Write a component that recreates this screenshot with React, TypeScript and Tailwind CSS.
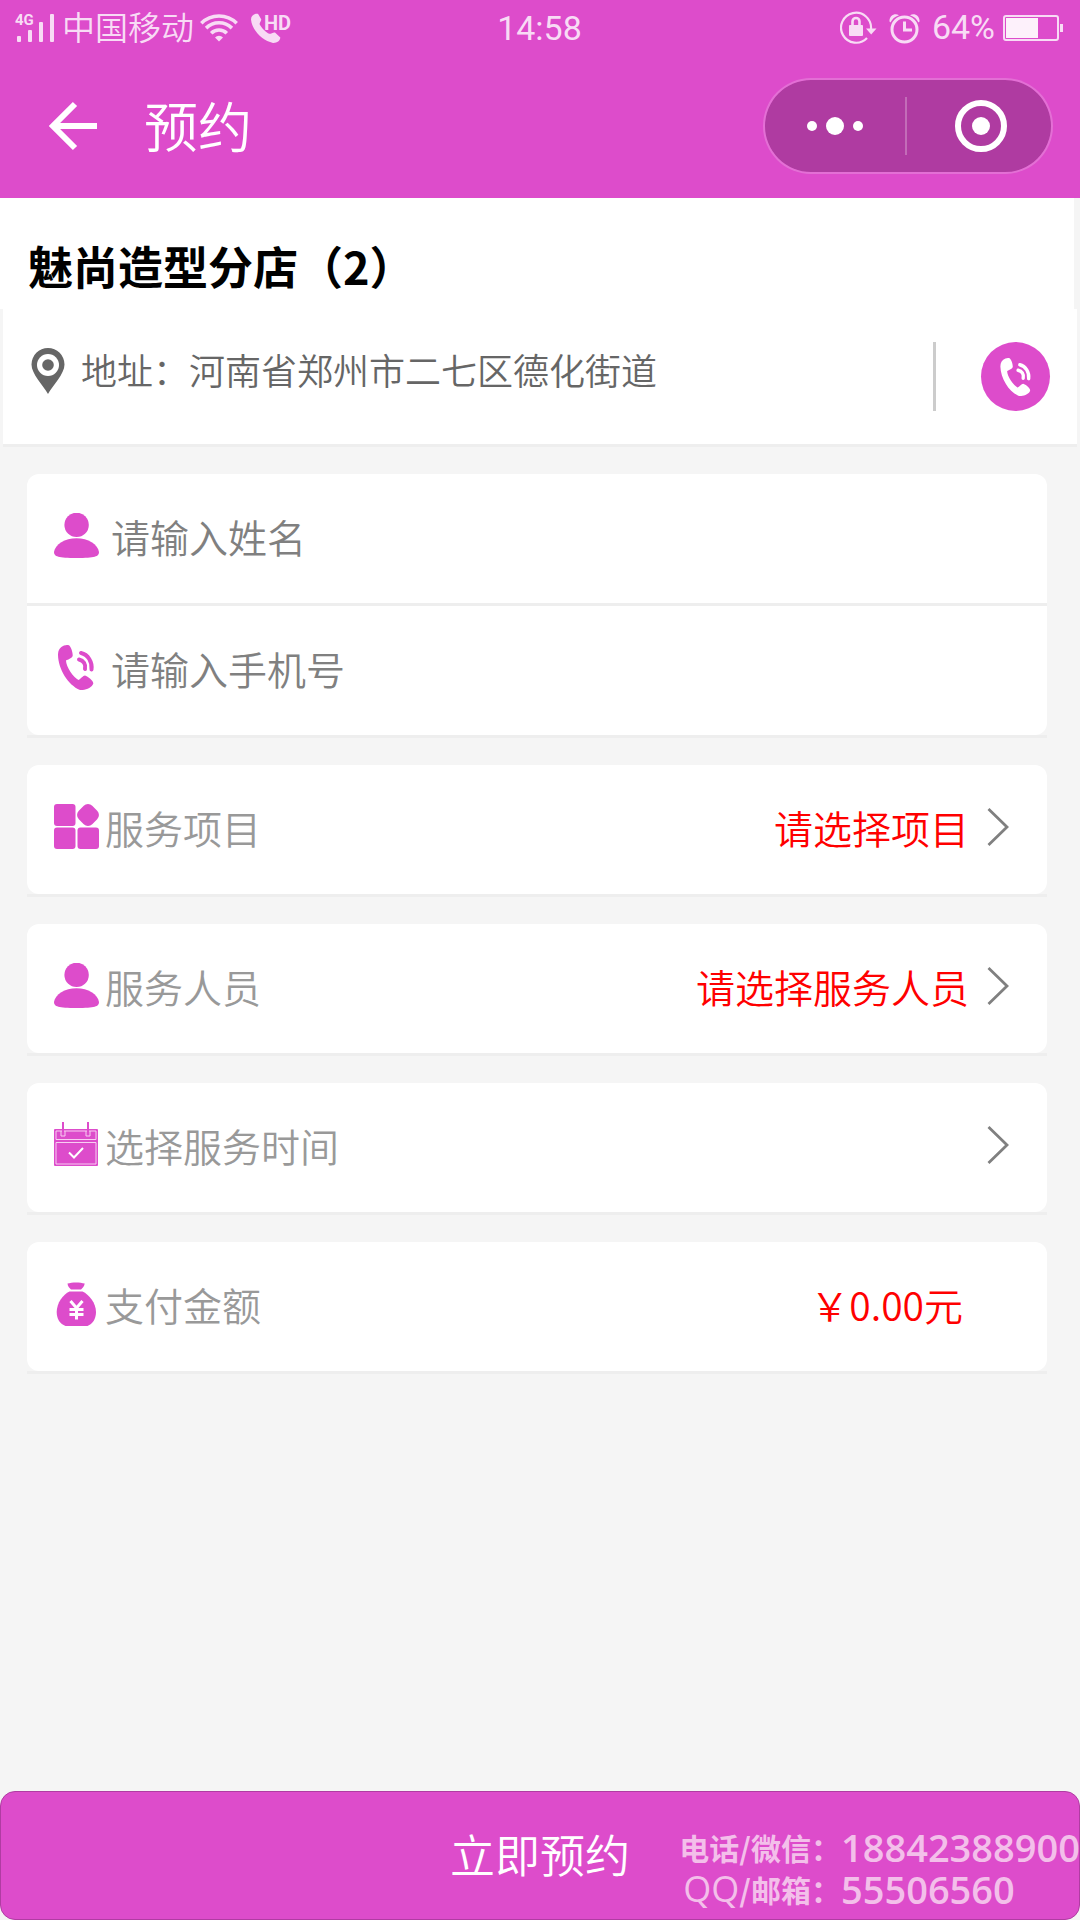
import { useState, type ReactNode } from "react";

function SignalIcon() {
  return (
    <svg width="40" height="38" viewBox="0 -4 40 38" fill="currentColor">
      <text x="0" y="12" className="font-['Roboto',sans-serif] text-[15px] font-bold">4G</text>
      <rect x="2" y="23" width="4" height="6" rx="1" />
      <rect x="13" y="17" width="4" height="12" rx="1" />
      <rect x="24" y="9" width="4" height="20" rx="1" />
      <rect x="35" y="1" width="4" height="28" rx="1" />
    </svg>
  );
}

function WifiIcon() {
  return (
    <svg width="40" height="30" viewBox="0 0 40 30" fill="none" stroke="currentColor" strokeWidth="3.6">
      <path d="M2.3 10.3A25.2 25.2 0 0 1 37.7 10.3" />
      <path d="M7.1 15.1A18.3 18.3 0 0 1 32.9 15.1" />
      <path d="M12.2 20.2A11 11 0 0 1 27.8 20.2" />
      <path d="M20 28.5L16 24.5A5.6 5.6 0 0 1 24 24.5Z" fill="currentColor" stroke="none" />
    </svg>
  );
}

function HdCallIcon() {
  return (
    <svg width="46" height="38" viewBox="0 -4 46 38" fill="currentColor">
      <path d="M5 .8C2 1.4 0 3.4 0 6.5C1 17 11 27.5 22 30C26 30.2 29 28 29.3 24.6L24 19.6C22.6 18.9 20 21 18.3 20.8C15 19.5 10.8 15.500 8.600 11.300C8.400 9.800 10.300 8 10.300 6.500L7.300 1.200C6.700 .6 6 .6 5 .8Z" />
      <text x="13" y="17" className="font-['Roboto',sans-serif] text-[20px] font-bold">HD</text>
    </svg>
  );
}

function RotationLockIcon() {
  return (
    <svg width="37" height="34" viewBox="0 0 37 34" fill="none" stroke="currentColor">
      <path d="M31 18A15 15 0 1 0 27 27" strokeWidth="2.2" />
      <path d="M26 17.500H36.500L31.200 23.500Z" fill="currentColor" stroke="none" />
      <rect x="9" y="14" width="14" height="11" rx="1" fill="currentColor" stroke="none" />
      <path d="M12.500 15V10.500A3.500 3.500 0 0 1 19.500 10.500V15" strokeWidth="2.600" />
    </svg>
  );
}

function AlarmIcon() {
  return (
    <svg width="31" height="31" viewBox="0 0 31 31" fill="none" stroke="currentColor">
      <circle cx="15.500" cy="16.500" r="12.500" strokeWidth="3" />
      <path d="M15.500 8.500V17H23" strokeWidth="3" />
      <path d="M.5 8.500C0 3 5.500-.5 10 2.200C6 3.600 3 6 1.500 9.500ZM30.500 8.500C31 3 25.500-.5 21 2.200C25 3.600 28 6 29.500 9.500Z" fill="currentColor" stroke="none" />
    </svg>
  );
}

function BatteryIcon() {
  return (
    <svg width="61" height="28" viewBox="0 0 61 28" fill="currentColor">
      <rect x="1" y="2" width="54" height="24" rx="2" fill="none" stroke="currentColor" strokeWidth="2" />
      <rect x="3" y="4" width="32" height="20" className="fill-[#fdf1fb]" />
      <rect x="57" y="10" width="3" height="8" />
    </svg>
  );
}

function BackIcon() {
  return (
    <svg width="48" height="50" viewBox="0 0 48 50" fill="none" stroke="currentColor" strokeWidth="6">
      <path d="M26 3L4 25L26 47M4 25H48" />
    </svg>
  );
}

function PinIcon() {
  return (
    <svg width="34" height="46" viewBox="0 0 34 46">
      <path d="M17 46C12 37 .5 26 .5 16.500A16.500 16.500 0 0 1 33.500 16.500C33.500 26 22 37 17 46Z" fill="#666" />
      <circle cx="17" cy="17" r="11" fill="#fff" />
      <circle cx="17" cy="17" r="5.800" fill="#666" />
    </svg>
  );
}

function PhoneIcon({ className }: { className: string }) {
  return (
    <svg viewBox="0 0 45 45" className={className} fill="currentColor">
      <path d="M10 .6C6 2.500 4 5 4 10C4.300 24 14 40 26 45C31 45.500 38 43 39.300 38.500C39.500 36 34 31.500 31 30.600C29 30.500 27 34 24.500 35C20 33 12 22 12 15.500C14 14.500 18.500 13 18.700 10.500C18.800 7 17 2 15 .3C13-.2 12 0 10 .6Z" />
      <path
        d="M27 8C34 9.500 38.500 17 37.500 24.500M25 14.500C29.500 15.500 32 19 31 24"
        fill="none"
        stroke="currentColor"
        strokeWidth="4"
        strokeLinecap="round"
      />
    </svg>
  );
}

function PersonIcon() {
  return (
    <svg width="45" height="45" viewBox="0 0 45 45" fill="currentColor">
      <circle cx="22.600" cy="11.900" r="12.200" />
      <path d="M0 39C1 31.500 11 25.300 22.500 25.300S44 31.500 45 39C45 43.500 41 45 22.500 45S0 43.500 0 39Z" />
    </svg>
  );
}

function ServiceIcon() {
  return (
    <svg width="45" height="45" viewBox="0 0 45 45" fill="currentColor">
      <rect x="0" y="0" width="21.500" height="22" rx="3" />
      <rect x="0" y="23.500" width="21.500" height="21.500" rx="3" />
      <rect x="23.500" y="23.500" width="21.500" height="21.500" rx="3" />
      <rect x="24.500" y="1.500" width="19" height="19" rx="6" transform="rotate(45 34 11)" />
    </svg>
  );
}

function CalendarIcon() {
  return (
    <svg width="45" height="45" viewBox="0 0 45 45" fill="none">
      <rect x="0" y="7" width="44" height="37" rx="1" fill="currentColor" />
      <g stroke="#f8cdf2">
        <path d="M2 9H42V17.500H2ZM2 20.500H42V42H2Z" />
        <path d="M7 9V14H11V9M32 9V14H36V9" />
      </g>
      <path d="M9 0V13M34 0V13" stroke="currentColor" strokeWidth="2" />
      <path d="M15 30.500L20 35.500L29 26" stroke="#fff" strokeWidth="2" />
    </svg>
  );
}

function MoneyBagIcon() {
  return (
    <svg width="45" height="45" viewBox="0 0 45 45" fill="none">
      <path d="M13.500 2.500C18 1 26 1 30.700 2.500C30.500 5 28.500 7 27 8.500H17C15.500 7 13.500 5 13.500 2.500Z" fill="currentColor" />
      <path d="M15.500 10.500H28.500C35 13.500 42 22 42 31C42 38 38.500 43 33.500 45H11.500C6 43 2.700 38 2.700 31C2.700 22 9 13.500 15.500 10.500Z" fill="currentColor" />
      <path d="M16.500 20L22.500 27L28.500 20M22.500 27V38.500M15.500 28.500H29.500M15.500 33.500H29.500" stroke="#fff" strokeWidth="3" />
    </svg>
  );
}

function Chevron() {
  return (
    <svg width="22" height="38" viewBox="0 0 22 38" fill="none" className="pointer-events-none shrink-0">
      <path d="M1.500 1L20 19L1.500 37" stroke="#808080" strokeWidth="2.800" />
    </svg>
  );
}

// white card with a flat rule under its rounded corners
function Card({ children }: { children: ReactNode }) {
  return (
    <div className="border-b-[3px] border-[#eee]">
      <div className="rounded-xl overflow-hidden bg-white">{children}</div>
    </div>
  );
}

const rowClass =
  "flex w-full items-center pl-[27px] pr-[38px] pt-[39px] pb-[45px] h-[129px] text-[39px] leading-[45px] text-[#dd4ccb]";
const labelClass = "ml-1.5 pt-0.5 shrink-0 text-[#999]";

interface InputRowProps {
  id: string;
  type: string;
  placeholder: string;
  icon: ReactNode;
}

function InputRow({ id, type, placeholder, icon }: InputRowProps) {
  return (
    <div className={rowClass}>
      <label htmlFor={id} aria-label={placeholder} className="shrink-0">
        {icon}
      </label>
      <input
        id={id}
        type={type}
        placeholder={placeholder}
        className="ml-3 h-14 min-w-0 flex-1 bg-transparent text-[#333] placeholder:text-[#808080] outline-none"
      />
    </div>
  );
}

interface SelectRowProps {
  id: string;
  label: string;
  prompt: string;
  icon: ReactNode;
}

function SelectRow({ id, label, prompt, icon }: SelectRowProps) {
  return (
    <Card>
      <div className={rowClass}>
        {icon}
        <label htmlFor={id} className={labelClass}>
          {label}
        </label>
        <select
          id={id}
          defaultValue=""
          className="mr-[18px] h-14 pt-0.5 min-w-0 flex-1 appearance-none bg-transparent text-right [text-align-last:right] text-[#f00] outline-none"
        >
          <option value="">{prompt}</option>
        </select>
        <Chevron />
      </div>
    </Card>
  );
}

export default function App() {
  const [amount] = useState(0);

  return (
    <div className="flex min-h-screen flex-col bg-[#f5f5f5] font-['Noto_Sans_CJK_SC',sans-serif] font-[350]">
      <header className="bg-[#dd4ccb] text-white">
        <div className="grid h-14 grid-cols-[1fr_auto_1fr] items-center pl-[15px] pr-4 text-[#f8dbf5]">
          <div className="flex items-center">
            <SignalIcon />
            <span className="ml-[7px] pb-1 text-[33px] leading-[44px]">中国移动</span>
            <span className="ml-[5px]">
              <WifiIcon />
            </span>
            <span className="ml-3">
              <HdCallIcon />
            </span>
          </div>
          <span className="font-['Roboto',sans-serif] text-[34px] leading-[48px] font-normal">14:58</span>
          <div className="flex items-center justify-end">
            <RotationLockIcon />
            <span className="ml-3">
              <AlarmIcon />
            </span>
            <span className="ml-3 mr-2 pb-0.5 font-['Roboto',sans-serif] text-[34px] leading-[48px] font-normal">64%</span>
            <BatteryIcon />
          </div>
        </div>

        <div className="flex h-[142px] items-center pl-[49px] pr-[27px] pb-0.5">
          <button type="button" aria-label="返回">
            <BackIcon />
          </button>
          <h1 className="ml-[47px] pb-0.5 text-[54px] leading-[72px]">预约</h1>
          <div className="ml-auto flex h-24 w-[290px] items-center rounded-full border-2 border-white/20 bg-[#af3ba1] bg-clip-padding">
            <button type="button" aria-label="更多" className="flex flex-1 items-center justify-center gap-[9px]">
              <span className="size-2.5 rounded-full bg-white" />
              <span className="size-[18px] rounded-full bg-white" />
              <span className="size-2.5 rounded-full bg-white" />
            </button>
            <span className="h-[58px] w-0.5 bg-white/25" />
            <button type="button" aria-label="关闭" className="flex flex-1 items-center justify-center pl-1">
              <span className="flex size-[52px] items-center justify-center rounded-full border-6 border-white">
                <span className="size-[18px] rounded-full bg-white" />
              </span>
            </button>
          </div>
        </div>
      </header>

      <main className="flex-1">
        <section>
          <h2 className="mr-1.5 bg-white pl-7 pt-[38px] pb-[13px] text-[45px] leading-[60px] font-bold text-black">
            魅尚造型分店（2）
          </h2>
          <div className="mx-[3px] flex h-[138px] items-center border-b-[3px] border-[#eee] bg-white pl-7 pr-[27px]">
            <div className="flex flex-1 items-center pb-3">
              <PinIcon />
              <p className="ml-4 pb-1 text-[36px] leading-[48px] text-[#666]">
                地址：河南省郑州市二七区德化街道
              </p>
            </div>
            <span className="h-[69px] w-[3px] bg-[#ccc]" />
            <a
              href="tel:"
              aria-label="拨打电话"
              className="ml-[45px] flex size-[69px] items-center justify-center rounded-full bg-[#dd4ccb] text-white"
            >
              <PhoneIcon className="size-[38px]" />
            </a>
          </div>
        </section>

        <form id="booking" className="ml-[27px] mr-[33px] mt-[27px] flex flex-col gap-[27px]">
          <Card>
            <InputRow id="name" type="text" placeholder="请输入姓名" icon={<PersonIcon />} />
            <div className="h-[3px] bg-[#eee]" />
            <InputRow id="phone" type="tel" placeholder="请输入手机号" icon={<PhoneIcon className="size-[45px]" />} />
          </Card>
          <SelectRow id="service" label="服务项目" prompt="请选择项目" icon={<ServiceIcon />} />
          <SelectRow id="staff" label="服务人员" prompt="请选择服务人员" icon={<PersonIcon />} />
          <Card>
            <button type="button" className={rowClass}>
              <CalendarIcon />
              <span className={labelClass}>选择服务时间</span>
              <span className="flex-1" />
              <Chevron />
            </button>
          </Card>
          <Card>
            <div className={rowClass}>
              <MoneyBagIcon />
              <span className={labelClass}>支付金额</span>
              <span className="ml-auto mr-[46px] pt-0.5 text-[#f00]">￥{amount.toFixed(2)}元</span>
            </div>
          </Card>
        </form>
      </main>

      <footer className="relative">
        <button
          type="submit"
          form="booking"
          className="block h-[129px] w-full rounded-[15px] border border-[#b03ca2] bg-[#dd4ccb] pb-1 text-[45px] leading-[60px] text-white"
        >
          立即预约
        </button>
        <div className="pointer-events-none absolute right-0 bottom-2.5 grid grid-cols-[auto_auto] text-[30px] leading-[42px] font-bold whitespace-nowrap text-[#f3bfea]">
          <span>电话/微信：</span>
          <span className="font-['Open_Sans',sans-serif] text-[38px] font-semibold">18842388900</span>
          <span className="pl-1">
            <span className="font-['Open_Sans',sans-serif] text-[36px] font-medium">QQ</span>/邮箱：
          </span>
          <span className="font-['Open_Sans',sans-serif] text-[38px] font-semibold">55506560</span>
        </div>
      </footer>
    </div>
  );
}
